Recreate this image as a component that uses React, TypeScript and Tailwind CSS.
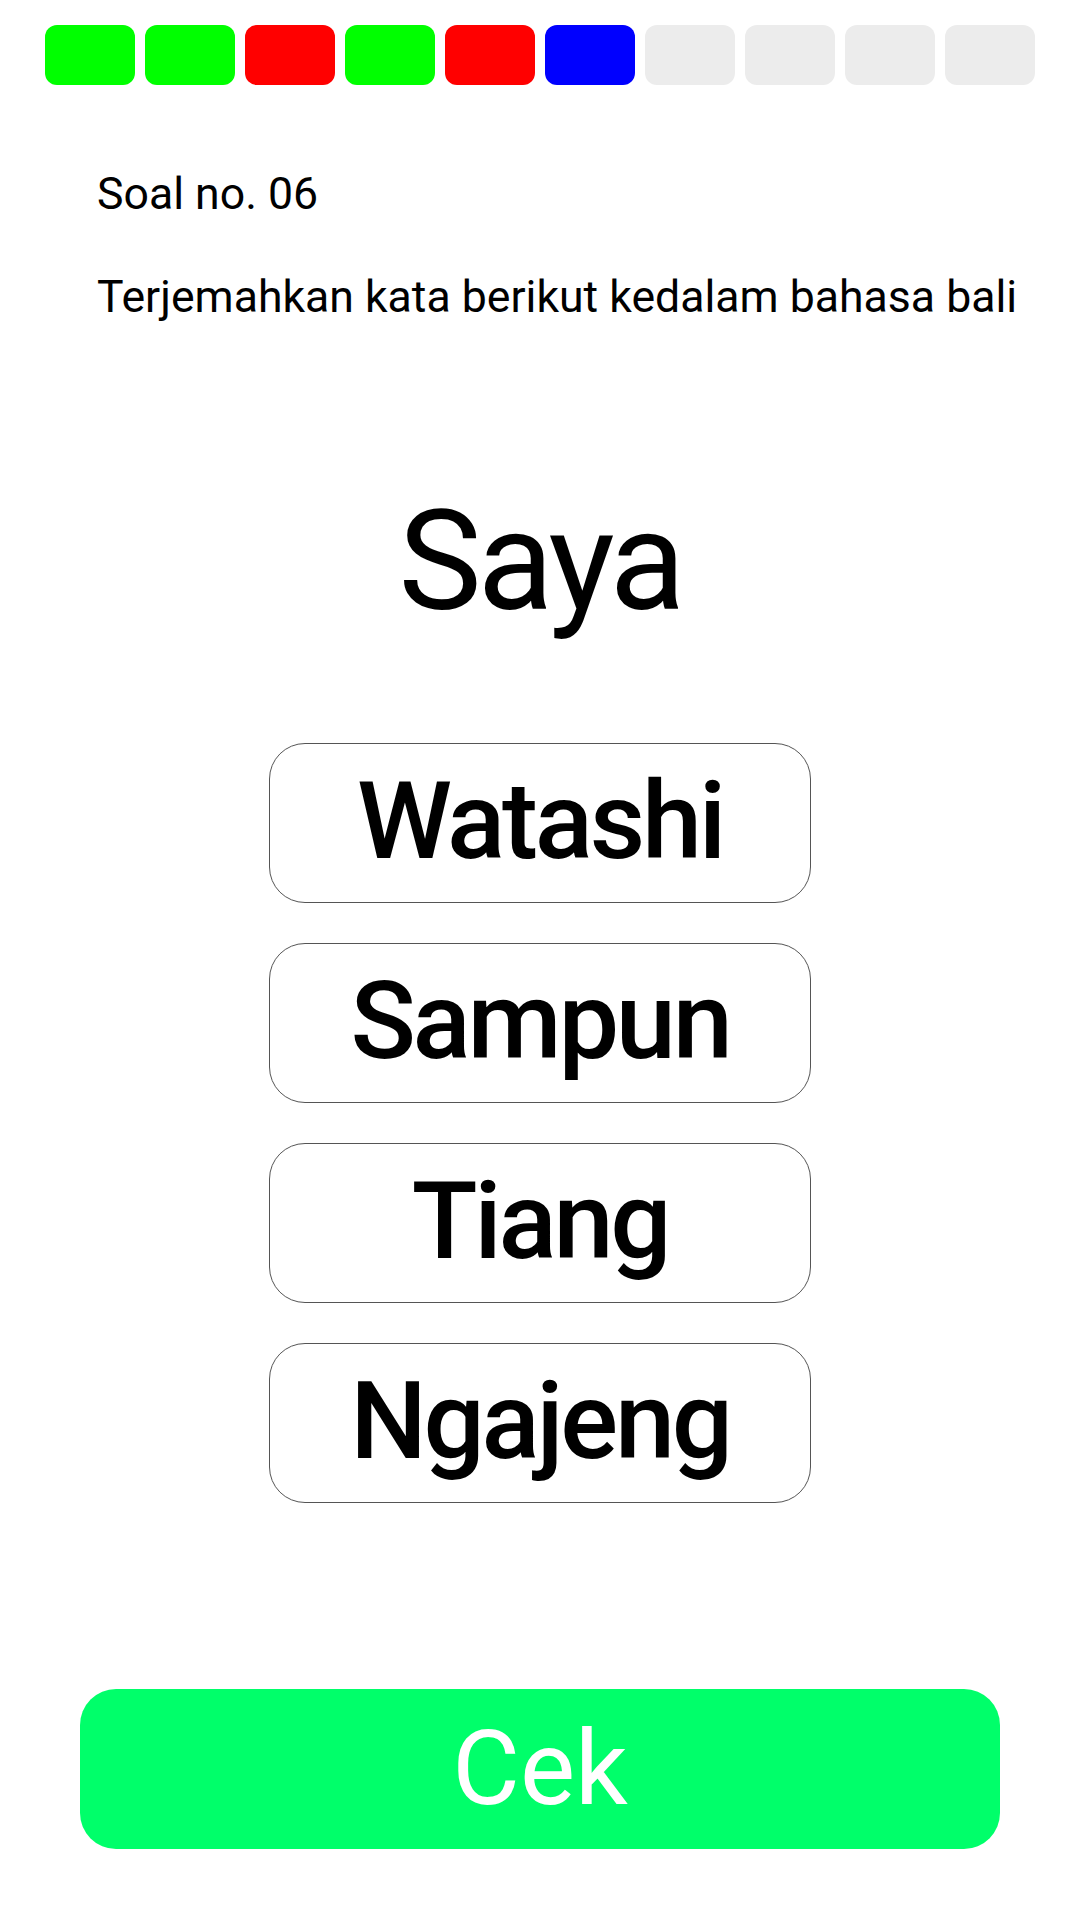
import React, { useState } from 'react';

const progress = ['#00ff00', '#00ff00', '#ff0000', '#00ff00', '#ff0000', '#0000ff', '#ececec', '#ececec', '#ececec', '#ececec'];

const options = ['Watashi', 'Sampun', 'Tiang', 'Ngajeng'];

const App = () => {
  const [picked, setPicked] = useState<string | null>(null);

  return (
    <div className="w-[1080px] min-h-[1920px] bg-white text-black font-['Roboto',sans-serif] flex flex-col">
      <div className="flex gap-[10px] px-[45px] pt-[25px]">
        {progress.map((c, i) => (
          <div key={i} className="w-[90px] h-[60px] rounded-[12px]" style={{ backgroundColor: c }} />
        ))}
      </div>

      <div className="pl-[97px] mt-[87px] text-[44.6px] leading-[44px] font-normal">Soal no. 06</div>
      <div className="pl-[97px] mt-[59px] text-[44.6px] leading-[44px] font-normal">
        Terjemahkan kata berikut kedalam bahasa bali
      </div>

      <div className="mt-[172px] text-center text-[140px] leading-[140px] font-normal tracking-[-0.03em]">Saya</div>

      <div className="mt-[112px] flex flex-col items-center gap-[40px]">
        {options.map((o) => (
          <button
            key={o}
            onClick={() => setPicked(o)}
            className={
              picked === o
                ? 'w-[542px] h-[160px] rounded-[36px] border border-[#555] bg-[#f2f2f2] flex items-center justify-center pb-[4px] text-[108px] leading-none font-medium tracking-[-0.03em]'
                : 'w-[542px] h-[160px] rounded-[36px] border border-[#555] bg-white flex items-center justify-center pb-[4px] text-[108px] leading-none font-medium tracking-[-0.03em]'
            }
          >
            {o}
          </button>
        ))}
      </div>

      <div className="mt-[186px] px-[80px]">
        <button className="w-full h-[160px] rounded-[36px] bg-[#00ff6a] text-white text-[104px] leading-none flex items-center justify-center">
          Cek
        </button>
      </div>
    </div>
  );
};

export default App;
